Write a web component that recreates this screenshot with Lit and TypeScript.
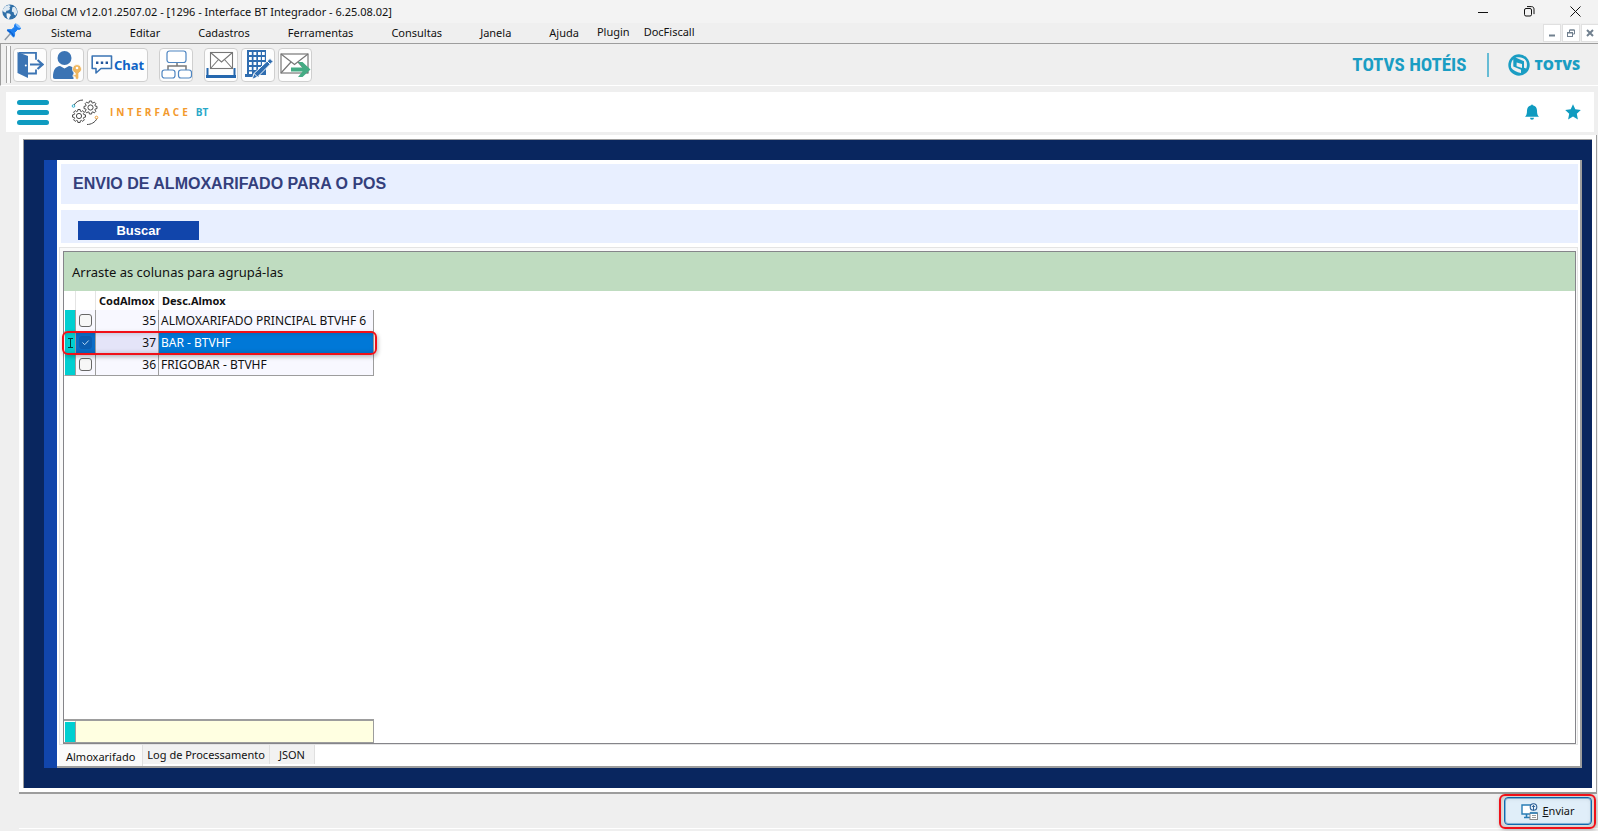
import { LitElement, html, css, svg } from "lit";
import { customElement, state } from "lit/decorators.js";
import { classMap } from "lit/directives/class-map.js";

interface Row {
  code: number;
  desc: string;
  checked: boolean;
}

const globeIcon = svg`<svg width="16" height="16" viewBox="0 0 16 16" aria-hidden="true">
  <circle cx="8" cy="8" r="7.6" fill="#2f6fa8"/>
  <path d="M1 5.2 3.2 2.2 6.8.9 8.6 2 7.4 3.6 8.2 5 6.2 6.6 4.4 6.8 3.8 8.6 2.2 8.2.8 7z" fill="#dfeaf3"/>
  <path d="M4.6 9.2 7.4 9.4 9 11 7.8 12.8 7 15.2 5.4 14.6 4.6 12z" fill="#eef4f9"/>
  <path d="M10.4 3.2 12.6 2.8 14.6 5.4 15.2 8.4 13.6 11.4 12 10.6 11.8 8.6 9.8 7.6 10 5.4z" fill="#dfeaf3"/>
</svg>`;

const pinIcon = svg`<svg width="18" height="18" viewBox="0 0 18 18" aria-hidden="true">
  <path d="M6.2 10.8.8 17" stroke="#8b98a5" stroke-width="1.4"/>
  <path d="M3 7c2-.9 3.500-.2 4.800-.4l2.800-2.600c-.3-1.300 0-2.300 1-3.200l5.200 4.600c-1 1.100-2 1.300-3.300 1L10.600 9.500c0 1.500.2 3.400-1 4.700z" fill="#1c7ff0" stroke="#1c7ff0"/>
  <path d="M11.600.8c1.800-.8 5.300 2.300 5 4.400-1.600.6-5.300-2.300-5-4.400z" fill="#7dbcff"/>
  <path d="M3.400 7.900c2.200-.5 5.300 2.500 6 5.300" stroke="#0a4fb5" fill="none"/>
</svg>`;

const exitIcon = svg`<svg width="28" height="28" viewBox="0 0 28 28" aria-hidden="true">
  <path d="M1.500 1 12 5v22L1.500 22z" fill="#3b74b4"/>
  <path d="M3 1.800h17v7M20 18.500v4h-8" fill="none" stroke="#3b74b4" stroke-width="1.800"/>
  <path d="M14 13.500h12M21.500 9l5 4.500-5 4.500" fill="none" stroke="#3b74b4" stroke-width="2.200"/>
  <circle cx="9.800" cy="14.500" r="1" fill="#fff"/>
</svg>`;

const userKeyIcon = svg`<svg width="30" height="30" viewBox="0 0 30 30" aria-hidden="true">
  <circle cx="12.500" cy="8" r="7" fill="#3b74b4"/>
  <path d="M1 27c0-7 2.500-10.500 7-11l4.500 2.500L17 16c2 .2 3.500 1 4.500 2.500V29H3c-1.500 0-2-.8-2-2z" fill="#3b74b4"/>
  <path d="M25 14.500a4.500 4.500 0 0 1 1.800 8.600V28L25 29.800 23.200 28v-1.200H21v-2h2.200v-1.700A4.500 4.500 0 0 1 25 14.500z" fill="#efb65e" stroke="#fdfdfd" stroke-width=".8"/>
  <circle cx="25" cy="18" r="1.300" fill="#fff"/>
</svg>`;

const chatIcon = svg`<svg width="22" height="20" viewBox="0 0 22 20" aria-hidden="true">
  <path d="M2 1h18.500v12.500H10L5 18v-4.500H1.200V1z" fill="#fff" stroke="#3b74b4" stroke-width="1.600" stroke-linejoin="round"/>
  <path d="M5 6.500h2.400v2.400H5zM9.800 6.500h2.400v2.400H9.800zM14.600 6.500H17v2.400h-2.400z" fill="#23569b"/>
</svg>`;

const treeIcon = svg`<svg width="31" height="29" viewBox="0 0 31 29" aria-hidden="true">
  <path d="M16 12v4M7 20v-4h18v4" fill="none" stroke="#777" stroke-width="1.500"/>
  <g fill="#fff" stroke="#4f86c2" stroke-width="1.200">
    <rect x="6" y="1" width="19" height="11.500" rx="2.500"/>
    <rect x="1" y="20" width="13" height="8" rx="2.500"/>
    <rect x="17.500" y="20" width="13" height="8" rx="2.500"/>
  </g>
</svg>`;

const inboxIcon = svg`<svg width="30" height="28" viewBox="0 0 30 28" aria-hidden="true">
  <path d="M1.500 17v8.500h27V17" fill="none" stroke="#2467ae" stroke-width="2"/>
  <path d="M0 25.500h30" stroke="#2467ae" stroke-width="3"/>
  <g fill="#fff" stroke="#777" stroke-width="1.100">
    <rect x="4.500" y="1.500" width="22" height="16"/>
    <path d="m4.500 1.500 11 9.500 11-9.500M4.500 17.500l8-9M26.500 17.500l-8-9" fill="none"/>
  </g>
</svg>`;

const buildingIcon = svg`<svg width="30" height="32" viewBox="0 0 30 32" aria-hidden="true">
  <path d="M4 1h19v25H4zM2 25h14v3H2z" fill="#2f6db0"/>
  <g fill="#fff">
    ${[3, 8, 13, 18].map((y) => [6, 10.5, 15, 19].map((x) => svg`<rect x=${x} y=${y} width="2.800" height="3"/>`))}
    <rect x="6" y="22.500" width="3" height="2.500"/>
  </g>
  <path d="m9 30.500 2-6L27 9.500l3 3-15.500 15.500z" fill="#2f6db0" stroke="#fdfdfd" stroke-width="1"/>
  <path d="m24 12 3.400 3.400M11 24.500l3.500 3.500" stroke="#fdfdfd"/>
</svg>`;

const sendMailIcon = svg`<svg width="31" height="26" viewBox="0 0 31 26" aria-hidden="true">
  <g fill="#fff" stroke="#777" stroke-width="1.200">
    <rect x="1" y="2" width="27" height="19"/>
    <path d="m1 2 13.500 10.500L28 2M1 21l10-11M28 21 18 10" fill="none"/>
  </g>
  <path d="M11 15.500h11.500l-4.500-5.500h4.500l8 7.500-8 7.500H18l4.500-5.500H11z" fill="#45ab84"/>
</svg>`;

const totvsIcon = svg`<svg width="22" height="22" viewBox="0 0 22 22" aria-hidden="true">
  <circle cx="11" cy="11" r="10.700" fill="#1a9dc3"/>
  <g fill="#efefef">
    <path d="M5.300 5.200v7.400l7.700 3.100v3.300C8.800 18.300 4.800 16.300 3.200 13.800 2.400 10.800 3.200 7.300 5.300 5.200z"/>
    <path d="M7.500 3.600C12 2.600 16.500 3.900 18 6.800c1.200 2.200 1.300 5 .2 7.700l-2.200-.8V7.200z"/>
    <path d="m8.600 8.500 5.400 1.600v4L8.600 12.200z"/>
  </g>
</svg>`;

const gearPath = (cx: number, cy: number) => {
  const points: string[] = [];
  for (let i = 0; i < 8; i++) {
    [[-0.28, 5], [-0.17, 6.6], [0.17, 6.6], [0.28, 5]].forEach(([d, r]) => {
      const a = (i * Math.PI) / 4 + d;
      points.push(`${(cx + r * Math.cos(a)).toFixed(2)},${(cy + r * Math.sin(a)).toFixed(2)}`);
    });
  }
  return points.join(" ");
};

const gearsIcon = svg`<svg width="28" height="26" viewBox="0 0 28 26" aria-hidden="true">
  <g fill="none" stroke="#4a4a4a">
    <polygon points=${gearPath(19.5, 8.5)}/>
    <circle cx="19.500" cy="8.500" r="2.600"/>
    <polygon points=${gearPath(8, 17)}/>
    <circle cx="8" cy="17" r="2.600"/>
    <path d="M3 6C5 3 8 1 12 1M16 25.500c4 0 8-2 10-6"/>
  </g>
  <circle cx="2.500" cy="7" r="1.300" fill="none" stroke="#35b0cf"/>
  <circle cx="25.500" cy="18.500" r="1.300" fill="none" stroke="#f0a13c"/>
</svg>`;

const bellIcon = svg`<svg width="14" height="16" viewBox="0 0 14 16" aria-hidden="true">
  <path d="M6.200 1.200a.8.8 0 0 1 1.600 0C10.500 1.700 12 3.800 12 6.500c0 3.500.6 4.800 2 6.300H0c1.400-1.500 2-2.800 2-6.300 0-2.700 1.500-4.800 4.200-5.300zM5 13.800h4a2 2 0 0 1-4 0z" fill="#0f9bc0"/>
</svg>`;

const starIcon = svg`<svg width="16" height="16" viewBox="0 0 16 16" aria-hidden="true">
  <path d="m8 .3 2.300 5 5.500.6-4 3.800 1.100 5.700L8 12.600l-4.900 2.800 1.100-5.700-4-3.800 5.500-.6z" fill="#0f9bc0"/>
</svg>`;

const sendIcon = svg`<svg width="17" height="17" viewBox="0 0 17 17" aria-hidden="true">
  <path d="M10 2H1v9h8" fill="#fff" stroke="#2a7db5" stroke-width="1.400"/>
  <path d="M3 14.500h6M5.500 11v3" stroke="#2a7db5" stroke-width="1.600"/>
  <circle cx="12.500" cy="4" r="3.300" fill="#e9f2fa" stroke="#2c5f96" stroke-width="1.100"/>
  <path d="M12.500 7.500v-5M10.900 4l1.600-1.600L14.100 4" fill="none" stroke="#2c5f96"/>
  <rect x="9" y="10" width="7.500" height="6.500" fill="#fff" stroke="#888"/>
  <path d="M9 10h7.500" stroke="#2a7db5" stroke-width="1.600"/>
  <path d="M11 12.500h4M11 14.500h4" stroke="#999"/>
</svg>`;

const MENU = ["Sistema", "Editar", "Cadastros", "Ferramentas", "Consultas", "Janela", "Ajuda"];
const EXTRA_MENU = ["Plugin", "DocFiscall"];
const TABS = ["Almoxarifado", "Log de Processamento", "JSON"];

@customElement("app-root")
export class AppRoot extends LitElement {
  @state() private rows: Row[] = [
    { code: 35, desc: "ALMOXARIFADO PRINCIPAL BTVHF 6", checked: false },
    { code: 37, desc: "BAR - BTVHF", checked: true },
    { code: 36, desc: "FRIGOBAR - BTVHF", checked: false },
  ];
  @state() private selected = 37;
  @state() private tab = TABS[0];

  static styles = css`
    :host {
      display: flex;
      flex-direction: column;
      min-height: 100vh;
      background: #efefef;
      color: #111;
      font: 11px/16px "Noto Sans", "Open Sans", sans-serif;
    }
    * { box-sizing: border-box; }
    button { font: inherit; color: inherit; border: 0; background: none; padding: 0; margin: 0; }
    svg { display: block; flex: none; }

    .titlebar { display: flex; align-items: center; height: 23px; padding-left: 2px; background: #f3f3f3; }
    .caption { margin: 0 auto 0 6px; font-size: 11px; font-weight: 400; }
    .win { display: flex; justify-content: center; width: 46px; }

    .menubar { display: flex; height: 21px; padding-left: 4px; border-bottom: 1px solid #9d9d9d; }
    .menu { display: flex; gap: 38px; height: 20px; padding: 0 18px 0 29px; }
    .extra { display: flex; flex: 1; gap: 14px; height: 18px; }
    .mdi { display: flex; gap: 3px; padding-top: 2px; }
    .mdi button { display: grid; place-items: center; width: 16px; height: 16px; background: #fff; outline: 1px solid #e0e0e0; }

    .toolbar { display: flex; align-items: center; height: 42px; padding: 0 18px 0 5px; border-left: 1px solid #9d9d9d; border-bottom: 1px solid #fff; }
    .grip { width: 5px; height: 37px; margin-right: 2px; border: solid #a5a5a5; border-width: 0 1px; background: #fafafa; }
    .tools { display: flex; gap: 3px; margin-right: auto; }
    .tool { display: flex; align-items: center; justify-content: center; gap: 1px; width: 34px; height: 34px; border: 1px solid #cfcfcf; border-radius: 4px; background: #fdfdfd; }
    .chat { width: 61px; color: #0f63c6; font-size: 13px; font-weight: 700; }
    .spaced { margin-left: 8px; }
    .brand { color: #1a9dc3; font: bold 19px/24px "Liberation Sans Narrow", "Roboto Condensed", "Roboto", sans-serif; }
    .divider { width: 2px; height: 24px; margin: 0 19px 0 20px; background: #66bcd5; }
    .totvs { margin-left: 5px; color: #1a9dc3; font: 800 14px/22px "Open Sans", sans-serif; }

    .appbar { display: flex; align-items: center; height: 40px; margin: 6px 4px 3px 6px; padding: 0 13px 0 11px; background: #fff; }
    .burger { display: grid; gap: 5px; width: 32px; }
    .burger i { height: 5px; border-radius: 3px; background: #0f9bc0; }
    .logo { display: flex; align-items: center; margin: 0 auto 0 22px; }
    .logo-text { margin: 0 0 0 11px; color: #f39a2d; font: bold 10px/16px "Open Sans", sans-serif; letter-spacing: 3px; }
    .logo-bt { margin-left: 5px; color: #28a8c8; font: bold 10px/16px "Open Sans", sans-serif; }
    .appbar-actions { display: flex; gap: 26px; }

    .frame { display: flex; flex: 1; margin: 0 1px 0 19px; padding: 4px; background: #fff; border-right: 1px solid #9d9d9d; border-bottom: 2px solid #9d9d9d; }
    .navy { display: flex; flex: 1; padding: 20px 10px 20px 20px; background: #09265f; border-top: 1px solid #9d9d9d; border-left: 1px solid #9d9d9d; min-width: 0; }
    .panel { display: flex; flex: 1; flex-direction: column; min-width: 0; border-left: 13px solid #1145ab; background: #fff; }
    .panel-body { display: flex; flex: 1; flex-direction: column; padding: 4px 2px 0 2px; border-right: 2px solid #9d9d9d; border-bottom: 2px solid #9d9d9d; }
    .heading { margin: 0 0 6px 2px; padding: 8px 12px; background: #e8efff; color: #343f7c; font: bold 16px/24px "Liberation Sans", sans-serif; }
    .search { margin: 0 0 4px 2px; padding: 11px 17px 3px; height: 33px; background: #e8efff; }
    .buscar { display: block; width: 121px; height: 19px; background: #1145ab; color: #fff; font: bold 13px/19px "Liberation Sans", sans-serif; }

    .sheet { display: flex; flex: 1; border: 1px solid #e4e4e4; padding: 3px 1px 0 3px; background: #fafafa; }
    .grid { display: flex; flex: 1; flex-direction: column; border: 1px solid #85858a; background: #fff; }
    .group { height: 39px; padding-left: 8px; background: #bfdcc0; font-size: 13px; line-height: 41px; }
    .table-wrap { position: relative; width: 310px; }
    table { width: 310px; table-layout: fixed; border-collapse: separate; border-spacing: 0; font-size: 12px; line-height: 20px; }
    .c-mark { width: 12px; }
    .c-check { width: 20px; }
    .c-code { width: 63px; }
    th { height: 19px; padding: 0 0 0 3px; border-right: 1px solid #e4e4e4; font-size: 11px; line-height: 18px; text-align: left; white-space: nowrap; }
    th:last-child { border-right: 0; }
    td { height: 22px; padding: 1px 2px 0; border-right: 1px solid #9d9d9d; border-bottom: 1px solid #9d9d9d; background: #f8f8ff; overflow: hidden; white-space: nowrap; }
    .mark { padding: 0; border-left: 1px solid #fff; background: #00cfd1; }
    .check { padding: 0; }
    .code { text-align: right; }
    .sel .code { background: #e4e4f8; }
    .sel .check { background: #0a6cc6; }
    .sel .desc { background: #0078d7; color: #fff; }
    .box { appearance: none; display: block; width: 13px; height: 13px; margin: 0 auto; border: 1px solid #666; border-radius: 3px; background: #f7f7f7; }
    .box:checked { border-color: #0a5db0; background: #0a5db0; }
    .tick { display: block; width: 13px; height: 13px; margin: -13px auto 0; pointer-events: none; position: relative; }
    .mark svg { margin: 0 auto; }
    .callout { position: absolute; inset: 40px -3px auto -2px; height: 24px; border: 2px solid #f01018; border-radius: 6px; box-shadow: 1px 2px 4px #0004, inset 0 0 5px #0003; pointer-events: none; }
    .footer { display: flex; width: 310px; height: 24px; margin-top: auto; border: 1px solid #9d9d9d; border-width: 2px 1px 1px 0; background: #ffffe1; }
    .footer i { width: 12px; border: solid #fff; border-width: 1px 0 0 1px; border-right: 1px solid #9d9d9d; background: #00cfd1; }

    .tabs { display: flex; height: 21px; }
    .tab { height: 19px; padding: 0 9px; border-right: 1px solid #e0e0e0; background: #f2f2f2; line-height: 18px; }
    .tab:nth-child(2) { padding: 0 4px; }
    .tab.on { height: 21px; padding: 2px 7px 0; background: #fafafa; }

    .bottom { display: flex; justify-content: flex-end; height: 37px; padding: 3px 6px 6px; border-bottom: 2px solid #efefef; position: relative; }
    .rule { position: absolute; inset: auto 0 0 19px; height: 1px; background: #fff; }
    .send { position: relative; display: flex; align-items: center; justify-content: center; gap: 4px; width: 88px; height: 28px; border: 1px solid #0f6fb8; border-radius: 4px; background: #e0eef9; box-shadow: inset 0 0 0 1px #86b9de; }
    .send-callout { position: absolute; inset: -4px -5px -5px -6px; border: 2px solid #f01018; border-radius: 6px; box-shadow: 1px 1px 4px #0004, inset 0 0 6px #0004; pointer-events: none; }
  `;

  private toggle(code: number) {
    this.selected = code;
    this.rows = this.rows.map((r) => (r.code === code ? { ...r, checked: !r.checked } : r));
  }

  private renderRow(row: Row) {
    const sel = row.code === this.selected;
    return html`<tr class=${classMap({ sel })}>
      <td class="mark">
        ${sel ? svg`<svg width="7" height="10" viewBox="0 0 7 10" aria-hidden="true"><path d="M1 .5h5M1 9.500h5M3.500.5v9" stroke="#003c40"/></svg>` : ""}
      </td>
      <td class="check">
        <input class="box" type="checkbox" aria-label=${"Selecionar " + row.desc} .checked=${row.checked} @change=${() => this.toggle(row.code)} />
        ${row.checked ? svg`<svg class="tick" viewBox="0 0 13 13" aria-hidden="true"><path d="m3.500 6.500 2.200 2.200 4-4.200" fill="none" stroke="#b9daf6"/></svg>` : ""}
      </td>
      <td class="code">${row.code}</td>
      <td class="desc">${row.desc}</td>
    </tr>`;
  }

  render() {
    return html`
      <header class="titlebar">
        ${globeIcon}
        <h1 class="caption">Global CM v12.01.2507.02 - [1296 - Interface BT Integrador - 6.25.08.02]</h1>
        <button class="win" aria-label="Minimizar"><svg width="11" height="11"><path d="M0 6.500h10" stroke="#111"/></svg></button>
        <button class="win" aria-label="Restaurar"><svg width="11" height="11" fill="none" stroke="#111"><rect x=".5" y="2.500" width="7" height="7.500" rx="1.500"/><path d="M3 .6h4.500c1.500 0 2.500 1 2.500 2.500v5"/></svg></button>
        <button class="win" aria-label="Fechar"><svg width="11" height="11" stroke="#111"><path d="m.5.5 10 10m0-10-10 10"/></svg></button>
      </header>

      <nav class="menubar" aria-label="Menu principal">
        ${pinIcon}
        <div class="menu">${MENU.map((m) => html`<button>${m}</button>`)}</div>
        <div class="extra">${EXTRA_MENU.map((m) => html`<button>${m}</button>`)}</div>
        <div class="mdi">
          <button aria-label="Minimizar janela"><svg width="8" height="8"><path d="M1 6.500h6" stroke="#71808f" stroke-width="2"/></svg></button>
          <button aria-label="Restaurar janela"><svg width="8" height="8" fill="none" stroke="#71808f"><rect x=".5" y="3.500" width="5" height="4"/><path d="M2.500 3V1h5v4H6M.5 4h5M2.500 1h5"/></svg></button>
          <button aria-label="Fechar janela"><svg width="8" height="8" stroke="#71808f" stroke-width="2"><path d="m1 1 6 6m0-6L1 7"/></svg></button>
        </div>
      </nav>

      <div class="toolbar">
        <div class="grip"></div>
        <div class="tools">
          <button class="tool" aria-label="Sair">${exitIcon}</button>
          <button class="tool" aria-label="Usuário">${userKeyIcon}</button>
          <button class="tool chat">${chatIcon}Chat</button>
          <button class="tool spaced" aria-label="Estrutura">${treeIcon}</button>
          <button class="tool spaced" aria-label="Caixa de entrada">${inboxIcon}</button>
          <button class="tool" aria-label="Hotel">${buildingIcon}</button>
          <button class="tool" aria-label="Enviar e-mail">${sendMailIcon}</button>
        </div>
        <span class="brand">TOTVS HOTÉIS</span>
        <span class="divider"></span>
        ${totvsIcon}<span class="totvs">TOTVS</span>
      </div>

      <div class="appbar">
        <button class="burger" aria-label="Abrir menu"><i></i><i></i><i></i></button>
        <div class="logo">${gearsIcon}<span class="logo-text">INTERFACE</span><span class="logo-bt">BT</span></div>
        <div class="appbar-actions">
          <button aria-label="Notificações">${bellIcon}</button>
          <button aria-label="Favoritos">${starIcon}</button>
        </div>
      </div>

      <main class="frame">
        <div class="navy">
          <div class="panel">
            <div class="panel-body">
              <h2 class="heading">ENVIO DE ALMOXARIFADO PARA O POS</h2>
              <div class="search"><button class="buscar">Buscar</button></div>
              <div class="sheet">
                <div class="grid">
                  <div class="group">Arraste as colunas para agrupá-las</div>
                  <div class="table-wrap">
                    <table>
                      <colgroup><col class="c-mark" /><col class="c-check" /><col class="c-code" /><col /></colgroup>
                      <thead><tr><th></th><th></th><th>CodAlmox</th><th>Desc.Almox</th></tr></thead>
                      <tbody>${this.rows.map((r) => this.renderRow(r))}</tbody>
                    </table>
                    <div class="callout"></div>
                  </div>
                  <div class="footer"><i></i></div>
                </div>
              </div>
              <div class="tabs" role="tablist">
                ${TABS.map((t) => html`<button role="tab" aria-selected=${t === this.tab} class=${classMap({ tab: true, on: t === this.tab })} @click=${() => (this.tab = t)}>${t}</button>`)}
              </div>
            </div>
          </div>
        </div>
      </main>

      <footer class="bottom">
        <div class="rule"></div>
        <button class="send">${sendIcon}<span><u>E</u>nviar</span><span class="send-callout"></span></button>
      </footer>
    `;
  }
}
